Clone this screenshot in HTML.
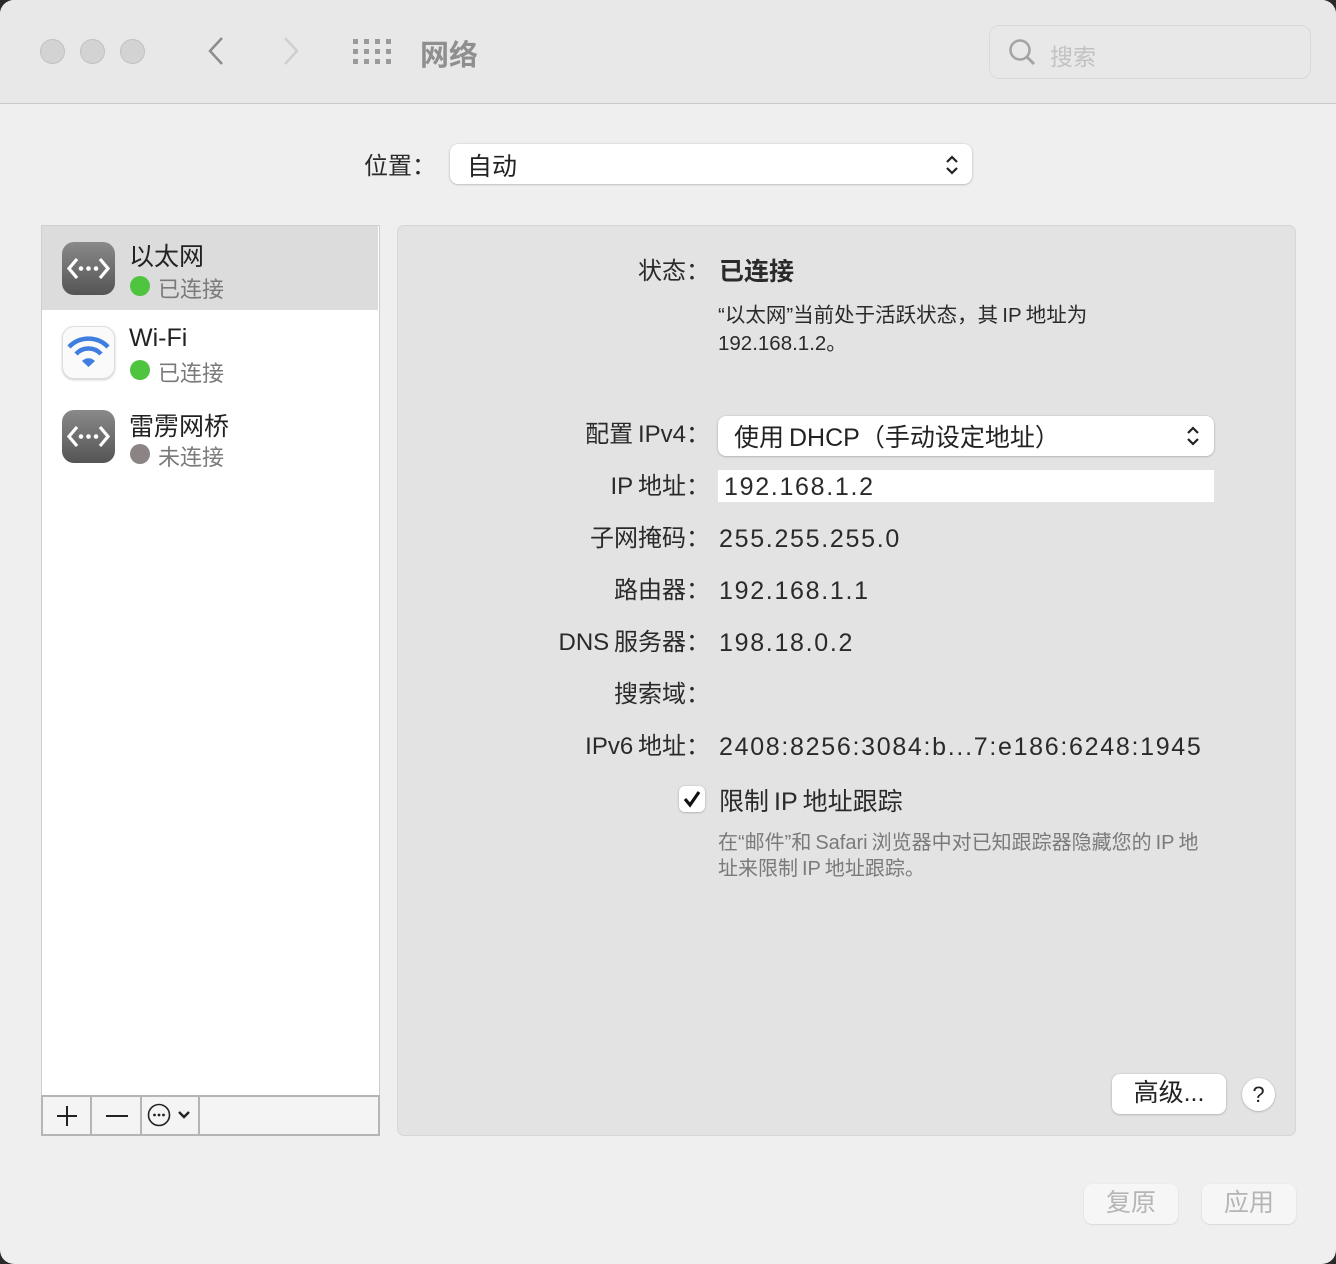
<!DOCTYPE html>
<html><head><meta charset="utf-8"><style>
*{margin:0;padding:0;box-sizing:border-box}
body{width:1336px;height:1264px;background:#2a2a2a;font-family:"Liberation Sans","Noto Sans CJK SC",sans-serif;color:#222;overflow:hidden;position:relative}
.win{position:absolute;left:0;top:0;width:1336px;height:1264px;background:#efefef;border-radius:14px;overflow:hidden}
.a{position:absolute;white-space:nowrap}
.tb{position:absolute;left:0;top:0;width:1336px;height:104px;background:#e8e8e8;border-bottom:1px solid #c9c9c9}
.tl{position:absolute;top:39px;width:25px;height:25px;border-radius:50%;background:#d3d3d3;border:1px solid #c2c2c2}
.lbl{position:absolute;right:626px;font-size:24px;color:#2a2a2a;white-space:nowrap;height:32px;line-height:32px}
.val{position:absolute;left:719px;font-size:25px;color:#2a2a2a;white-space:nowrap;height:32px;line-height:32px;letter-spacing:1.7px}
.row{position:absolute;left:42px;width:336px;height:84px}
.ic{position:absolute;left:20px;top:16px;width:53px;height:53px;border-radius:12px;background:linear-gradient(#8a8a8a,#555);}
.nm{position:absolute;left:87px;top:12px;font-size:25px;color:#222}
.st{position:absolute;left:116px;top:46px;font-size:22px;color:#7a7a7a}
.dot{position:absolute;left:88px;top:50px;width:20px;height:20px;border-radius:50%}
.btn{position:absolute;background:#fff;border-radius:8px;box-shadow:0 0.5px 2px rgba(0,0,0,.3);text-align:center}
</style></head><body>
<div class="win">
<div class="tb"></div>
<div class="tl" style="left:40px"></div><div class="tl" style="left:80px"></div><div class="tl" style="left:120px"></div>
<svg class="a" style="left:205px;top:36px" width="22" height="30"><path d="M17 2 L5 15 L17 28" stroke="#8c8c8c" stroke-width="2.5" fill="none"/></svg>
<svg class="a" style="left:280px;top:36px" width="22" height="30"><path d="M5 2 L17 15 L5 28" stroke="#cfcfcf" stroke-width="2.5" fill="none"/></svg>
<svg class="a" style="left:353px;top:39px" width="38" height="26" fill="#9a9a9a">
<rect x="0" y="0" width="5" height="5"/><rect x="11" y="0" width="5" height="5"/><rect x="22" y="0" width="5" height="5"/><rect x="33" y="0" width="5" height="5"/>
<rect x="0" y="10" width="5" height="5"/><rect x="11" y="10" width="5" height="5"/><rect x="22" y="10" width="5" height="5"/><rect x="33" y="10" width="5" height="5"/>
<rect x="0" y="20" width="5" height="5"/><rect x="11" y="20" width="5" height="5"/><rect x="22" y="20" width="5" height="5"/><rect x="33" y="20" width="5" height="5"/></svg>
<div class="a" style="left:420px;top:32px;font-size:29px;font-weight:bold;color:#8f8f8f">网络</div>
<div class="a" style="left:989px;top:25px;width:322px;height:54px;border:1.5px solid #dadada;border-radius:10px"></div>
<svg class="a" style="left:1008px;top:38px" width="30" height="30"><circle cx="12" cy="12" r="9.5" stroke="#a4a4a4" stroke-width="2.5" fill="none"/><path d="M19 19 L26 26" stroke="#a4a4a4" stroke-width="3"/></svg>
<div class="a" style="left:1050px;top:38px;font-size:23px;color:#c2c2c2">搜索</div>

<div class="a" style="left:364px;top:146px;font-size:24px;color:#2a2a2a">位置：</div>
<div class="btn" style="left:450px;top:144px;width:522px;height:40px;text-align:left"><span class="a" style="left:17px;top:3px;font-size:25px">自动</span>
<svg class="a" style="left:494px;top:9px" width="16" height="24"><path d="M3 9 L8 4 L13 9 M3 15 L8 20 L13 15" stroke="#222" stroke-width="2.2" fill="none"/></svg></div>

<div class="a" style="left:41px;top:225px;width:339px;height:911px;background:#fff;border:1px solid #cfcfcf"></div>
<div class="row" style="top:226px;background:#dcdcdc">
 <div class="ic"><svg width="53" height="53"><path d="M15 17 L7 26.5 L15 36 M38 17 L46 26.5 L38 36" stroke="#fff" stroke-width="3.2" fill="none"/><circle cx="19" cy="26.5" r="2.3" fill="#fff"/><circle cx="26.5" cy="26.5" r="2.3" fill="#fff"/><circle cx="34" cy="26.5" r="2.3" fill="#fff"/></svg></div>
 <div class="nm" style="top:11px">以太网</div><div class="dot" style="background:#4fc43f"></div><div class="st">已连接</div></div>
<div class="row" style="top:310px">
 <div class="ic" style="background:#fafafa;border:1px solid #ddd;box-shadow:0 1px 2px rgba(0,0,0,.2)"><svg width="51" height="51"><path d="M6 20 A27 27 0 0 1 45 20" stroke="#3f7ee0" stroke-width="4.5" fill="none"/><path d="M13 27 A17 17 0 0 1 38 27" stroke="#3f7ee0" stroke-width="4.5" fill="none"/><path d="M19 34 L25.5 40 L32 34 A9 9 0 0 0 19 34Z" fill="#3f7ee0"/></svg></div>
 <div class="nm" style="top:14px">Wi-Fi</div><div class="dot" style="background:#4fc43f"></div><div class="st">已连接</div></div>
<div class="row" style="top:394px">
 <div class="ic"><svg width="53" height="53"><path d="M15 17 L7 26.5 L15 36 M38 17 L46 26.5 L38 36" stroke="#fff" stroke-width="3.2" fill="none"/><circle cx="19" cy="26.5" r="2.3" fill="#fff"/><circle cx="26.5" cy="26.5" r="2.3" fill="#fff"/><circle cx="34" cy="26.5" r="2.3" fill="#fff"/></svg></div>
 <div class="nm" style="top:13px">雷雳网桥</div><div class="dot" style="background:#8c8484"></div><div class="st">未连接</div></div>

<div class="a" style="left:41px;top:1095px;width:339px;height:41px;background:#f4f4f4;border:2px solid #b5b5b5"></div>
<div class="a" style="left:90px;top:1095px;width:2px;height:41px;background:#b5b5b5"></div>
<div class="a" style="left:140px;top:1095px;width:2px;height:41px;background:#b5b5b5"></div>
<div class="a" style="left:198px;top:1095px;width:2px;height:41px;background:#b5b5b5"></div>
<svg class="a" style="left:55px;top:1104px" width="24" height="24"><path d="M12 2 V22 M2 12 H22" stroke="#222" stroke-width="2"/></svg>
<svg class="a" style="left:105px;top:1104px" width="24" height="24"><path d="M1 12 H23" stroke="#222" stroke-width="2"/></svg>
<svg class="a" style="left:146px;top:1102px" width="50" height="26"><circle cx="13" cy="13" r="10.5" stroke="#222" stroke-width="1.6" fill="none"/><circle cx="8.5" cy="13" r="1.4" fill="#222"/><circle cx="13" cy="13" r="1.4" fill="#222"/><circle cx="17.5" cy="13" r="1.4" fill="#222"/><path d="M33 10 L38 15 L43 10" stroke="#222" stroke-width="2.4" fill="none"/></svg>

<div class="a" style="left:397px;top:225px;width:899px;height:911px;background:#e3e3e3;border:1px solid #d6d6d6;border-radius:7px"></div>
<div class="lbl" style="top:256px">状态：</div>
<div class="val" style="top:256px;font-weight:bold;font-size:25px;letter-spacing:0">已连接</div>
<div class="a" style="left:718px;top:302px;font-size:20.5px;line-height:28px;color:#2a2a2a">“以太网”当前处于活跃状态，其&thinsp;IP&thinsp;地址为<br>192.168.1.2。</div>
<div class="lbl" style="top:419px">配置&thinsp;IPv4：</div>
<div class="btn" style="left:718px;top:416px;width:496px;height:40px;text-align:left"><span class="a" style="left:16px;top:2px;font-size:25px">使用&thinsp;DHCP（手动设定地址）</span>
<svg class="a" style="left:467px;top:8px" width="16" height="24"><path d="M3 9 L8 4 L13 9 M3 15 L8 20 L13 15" stroke="#222" stroke-width="2.2" fill="none"/></svg></div>
<div class="lbl" style="top:471px">IP&thinsp;地址：</div>
<div class="a" style="left:718px;top:470px;width:496px;height:32px;background:#fff"></div>
<div class="val" style="top:471px;left:724px">192.168.1.2</div>
<div class="lbl" style="top:523px">子网掩码：</div><div class="val" style="top:523px">255.255.255.0</div>
<div class="lbl" style="top:575px">路由器：</div><div class="val" style="top:575px">192.168.1.1</div>
<div class="lbl" style="top:627px">DNS&thinsp;服务器：</div><div class="val" style="top:627px">198.18.0.2</div>
<div class="lbl" style="top:679px">搜索域：</div>
<div class="lbl" style="top:731px">IPv6&thinsp;地址：</div><div class="val" style="top:731px">2408:8256:3084:b...7:e186:6248:1945</div>
<div class="a" style="left:679px;top:786px;width:26px;height:26px;background:#fff;border-radius:6px;box-shadow:0 0.5px 2px rgba(0,0,0,.3)"></div>
<svg class="a" style="left:679px;top:786px" width="26" height="26"><path d="M6 13 L11 19 L20 6" stroke="#111" stroke-width="3.2" fill="none"/></svg>
<div class="a" style="left:719px;top:782px;font-size:25px;color:#2a2a2a">限制&thinsp;IP&thinsp;地址跟踪</div>
<div class="a" style="left:718px;top:830px;font-size:20px;line-height:26px;color:#7a7a7a">在“邮件”和&thinsp;Safari&thinsp;浏览器中对已知跟踪器隐藏您的&thinsp;IP&thinsp;地<br>址来限制&thinsp;IP&thinsp;地址跟踪。</div>
<div class="btn" style="left:1112px;top:1074px;width:114px;height:40px;font-size:25px;line-height:38px">高级...</div>
<div class="btn" style="left:1242px;top:1078px;width:33px;height:33px;border-radius:50%;font-size:22px;line-height:33px">?</div>
<div class="btn" style="left:1084px;top:1184px;width:94px;height:40px;font-size:25px;line-height:38px;color:#b5b5b5;background:#f6f6f6;box-shadow:0 0.5px 1.5px rgba(0,0,0,.15)">复原</div>
<div class="btn" style="left:1202px;top:1184px;width:94px;height:40px;font-size:25px;line-height:38px;color:#b5b5b5;background:#f6f6f6;box-shadow:0 0.5px 1.5px rgba(0,0,0,.15)">应用</div>
</div>
</body></html>
